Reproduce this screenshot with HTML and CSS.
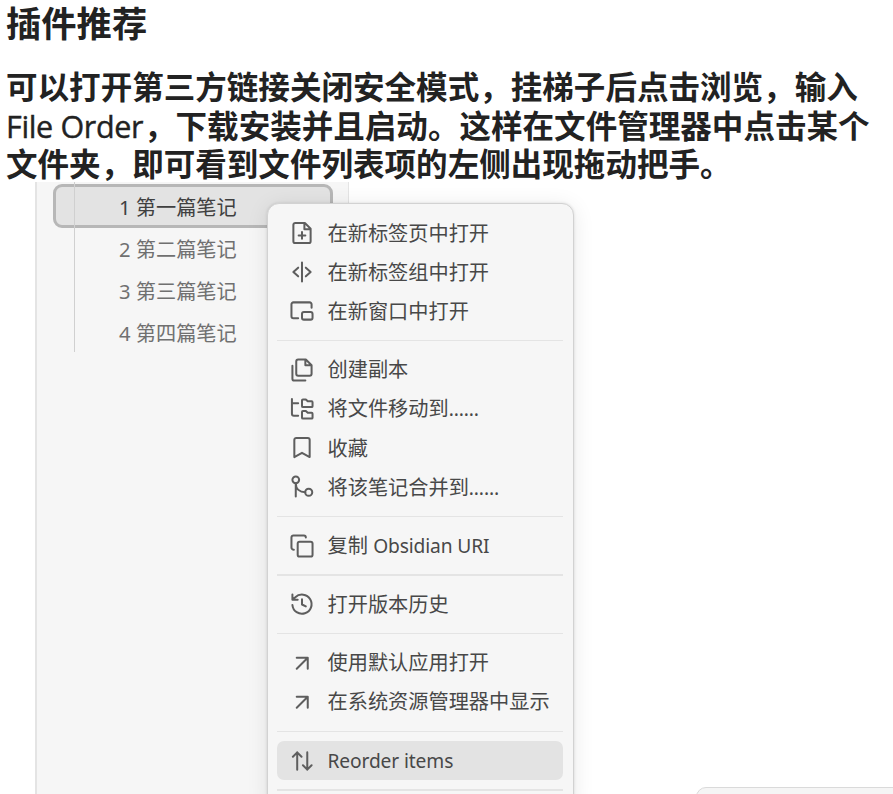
FILE: index.html
```html
<!DOCTYPE html>
<html lang="zh-CN">
<head>
<meta charset="utf-8">
<title>插件推荐</title>
<link rel="stylesheet" href="styles.css">
</head>
<body>
<article class="page">
  <h1 class="title">插件推荐</h1>
  <h2 class="intro">可以打开第三方链接关闭安全模式，挂梯子后点击浏览，输入<br><span class="latin">File Order</span>，下载安装并且启动。这样在文件管理器中点击某个<br>文件夹，即可看到文件列表项的左侧出现拖动把手。</h2>
  <section class="figure">
    <div class="sidebar">
      <ul class="notes">
        <li class="note active">1 第一篇笔记</li>
        <li class="note">2 第二篇笔记</li>
        <li class="note">3 第三篇笔记</li>
        <li class="note">4 第四篇笔记</li>
      </ul>
    </div>
    <div class="menu">
      <div class="item"><svg viewBox="0 0 24 24"><path d="M15 1.500H5A2 2 0 0 0 3 3.500v17a2 2 0 0 0 2 2h14a2 2 0 0 0 2-2V7.500zM14.500 2v6H21M12 11v7M8.500 14.500h7"/></svg><span>在新标签页中打开</span></div>
      <div class="item"><svg viewBox="0 0 24 24"><path d="M12 2v20M8 7.500 3 12l5 4.500M16 7.500l5 4.500-5 4.500"/></svg><span>在新标签组中打开</span></div>
      <div class="item"><svg viewBox="0 0 24 24"><path d="M22 8.500V5a2 2 0 0 0-2-2H3a2 2 0 0 0-2 2v12.500a2 2 0 0 0 2 2h5"/><rect x="12" y="13" width="11" height="8" rx="2"/></svg><span>在新窗口中打开</span></div>
      <hr class="rule">
      <div class="item"><svg viewBox="0 0 24 24"><path d="M16 1H8a2 2 0 0 0-2 2v13a2 2 0 0 0 2 2h12a2 2 0 0 0 2-2V7zM15.500 1v6H22M2 7.500V21a2 2 0 0 0 2 2h11.500"/></svg><span>创建副本</span></div>
      <div class="item"><svg viewBox="0 0 24 24"><path d="M1.500 1.500v15.500a2 2 0 0 0 2 2H8M1.500 6H8M12 3a1 1 0 0 1 1-1h3l2 2h4a1 1 0 0 1 1 1v4a1 1 0 0 1-1 1h-9a1 1 0 0 1-1-1zM12 15a1 1 0 0 1 1-1h3l2 2h4a1 1 0 0 1 1 1v4a1 1 0 0 1-1 1h-9a1 1 0 0 1-1-1z"/></svg><span>将文件移动到<span class="en">……</span></span></div>
      <div class="item"><svg viewBox="0 0 24 24"><path d="M4 21.500V3.500a2 2 0 0 1 2-2h12a2 2 0 0 1 2 2v18l-8-4.500z"/></svg><span>收藏</span></div>
      <div class="item"><svg viewBox="0 0 24 24"><circle cx="5.500" cy="4.500" r="3.500"/><circle cx="19" cy="17.500" r="3.700"/><path d="M5.500 8v14M5.500 8c0 6 4 9.500 10 9.500"/></svg><span>将该笔记合并到<span class="en">……</span></span></div>
      <hr class="rule">
      <div class="item"><svg viewBox="0 0 24 24"><rect x="7.500" y="7.500" width="15.500" height="15.500" rx="2"/><path d="M3.500 16A2.500 2.500 0 0 1 1 13.500V3a2 2 0 0 1 2-2h11a2 2 0 0 1 2 2"/></svg><span>复制 <span class="en">Obsidian URI</span></span></div>
      <hr class="rule">
      <div class="item"><svg viewBox="0 0 24 24"><path d="M2 13a10 10 0 1 0 3-8L2 7.500M2 2v5.500h5.500M12 7v5.500l4 2"/></svg><span>打开版本历史</span></div>
      <hr class="rule">
      <div class="item"><svg viewBox="0 0 24 24"><path d="M6.500 18 18 6.500M6.500 6.500H18V18"/></svg><span>使用默认应用打开</span></div>
      <div class="item"><svg viewBox="0 0 24 24"><path d="M6.500 18 18 6.500M6.500 6.500H18V18"/></svg><span>在系统资源管理器中显示</span></div>
      <hr class="rule">
      <div class="item selected"><svg viewBox="0 0 24 24"><path d="M7 21V3M2.500 7.500 7 3l4.500 4.500M17.500 3v18M13 16.500l4.500 4.500 4.500-4.500"/></svg><span class="en">Reorder items</span></div>
      <hr class="rule">
    </div>
  </section>
  <div class="toast"></div>
</article>
</body>
</html>
```
FILE: styles.css
```css
* {
  box-sizing: border-box;
}

body {
  margin: 0;
  background: #fff;
  color: #222;
  font-family: "Noto Sans", "Noto Sans CJK SC", sans-serif;
}

.page {
  position: relative;
  display: flex;
  flex-direction: column;
  height: 794px;
  overflow: hidden;
}

.title {
  margin: 0;
  padding-left: 6px;
  font: 700 35.3px/44px "Noto Sans CJK SC", sans-serif;
}

.intro {
  margin: 0;
  padding: 22px 0 0 6px;
  height: 138px;
  font: 700 31.55px/38.5px "Noto Sans CJK SC", sans-serif;
  white-space: nowrap;
}

.latin {
  display: inline-block;
  width: 138px;
  font-family: "Open Sans", sans-serif;
  font-size: 30.5px;
  font-weight: 400;
  line-height: 30px;
  letter-spacing: -0.35px;
  -webkit-text-stroke: 0.4px #222;
}

.figure {
  position: relative;
  flex: 1;
  margin-left: 35px;
}

.sidebar {
  width: 314px;
  height: 100%;
  padding: 2px 15px 0 16px;
  background: #f6f6f6;
  border-left: 2px solid #e4e4e4;
  border-right: 1px solid #e4e4e4;
}

.notes {
  position: relative;
  margin: 0;
  padding: 0;
  list-style: none;
}

.notes::before {
  content: "";
  position: absolute;
  left: 21px;
  top: -2px;
  width: 1px;
  height: 170px;
  background: #d0d0d0;
}

.note {
  height: 42px;
  padding-left: 66px;
  font-size: 20.2px;
  line-height: 42px;
  color: #707070;
  white-space: pre;
}

.note.active {
  height: 44px;
  padding-left: 63px;
  line-height: 40px;
  color: #404040;
  background: #e3e3e3;
  border: 3px solid #b7b7b7;
  border-radius: 9px;
}

.menu {
  position: absolute;
  left: 232px;
  top: 21px;
  width: 307px;
  padding: 9.5px 10px 9px 8.5px;
  background: #f6f6f6;
  border: 1px solid #d2d2d2;
  border-radius: 12px;
  box-shadow: 0 3px 22px rgba(0, 0, 0, 0.09), 0 0 3px rgba(0, 0, 0, 0.12);
}

.item {
  display: flex;
  align-items: center;
  gap: 14px;
  height: 39.1px;
  padding-left: 13px;
  border-radius: 7px;
  font-size: 20.2px;
  line-height: 39px;
  color: #484848;
  white-space: nowrap;
}

.item svg {
  width: 24px;
  height: 24px;
  padding: 0.5px;
  overflow: visible;
  fill: none;
  stroke: #5e5e5e;
  stroke-width: 2.1;
  stroke-linecap: round;
  stroke-linejoin: round;
}

.en {
  font-size: 19.2px;
  letter-spacing: -0.12px;
}

.selected {
  background: #e3e3e3;
}

.rule {
  height: 1.5px;
  margin: 9px 0;
  border: 0;
  background: #e4e4e4;
}

.toast {
  position: absolute;
  left: 696px;
  top: 787px;
  width: 220px;
  height: 40px;
  background: #f5f5f5;
  border: 1px solid #dadada;
  border-radius: 10px;
}
```
